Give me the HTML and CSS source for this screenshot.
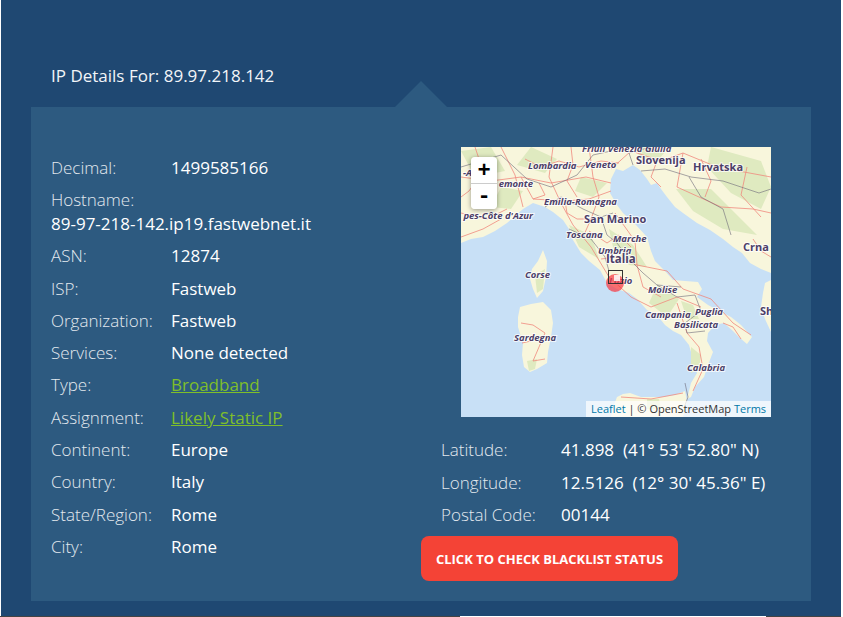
FILE: index.html
```html
<!DOCTYPE html>
<html lang="en">
<head>
<meta charset="utf-8">
<title>IP Details</title>
<link rel="stylesheet" href="styles.css">
</head>
<body>
<div class="page">
  <section class="details">
    <h2 class="heading">IP Details For: 89.97.218.142</h2>
    <div class="panel">
      <span class="arrow"></span>
      <div class="col col-left">
        <div class="row"><span class="key">Decimal:</span><span class="val">1499585166</span></div>
        <div class="row"><span class="key">Hostname:</span> <span class="val">89-97-218-142.ip19.fastwebnet.it</span></div>
        <div class="row"><span class="key">ASN:</span><span class="val">12874</span></div>
        <div class="row"><span class="key">ISP:</span><span class="val">Fastweb</span></div>
        <div class="row"><span class="key">Organization:</span><span class="val">Fastweb</span></div>
        <div class="row"><span class="key">Services:</span><span class="val">None detected</span></div>
        <div class="row"><span class="key">Type:</span><a class="link" href="#">Broadband</a></div>
        <div class="row"><span class="key">Assignment:</span><a class="link" href="#">Likely Static IP</a></div>
        <div class="row"><span class="key">Continent:</span><span class="val">Europe</span></div>
        <div class="row"><span class="key">Country:</span><span class="val">Italy</span></div>
        <div class="row"><span class="key">State/Region:</span><span class="val">Rome</span></div>
        <div class="row"><span class="key">City:</span><span class="val">Rome</span></div>
      </div>
      <div class="col col-right">
        <div class="map">
          <svg class="map-art" viewBox="0 0 310 270" width="310" height="270" aria-label="Map of Italy">
            <rect class="sea" width="310" height="270"/>
            <g class="base">
              <path class="land" d="M0 0H310V126L300 122 289 116 281 106 272 100 262 92 249 83 236 76 222 66 214 60 206 50 200 42 196 36 190 38 186 32 179 23 172 18 162 24 155 22 150 32 149 46 156 58 162 66 175 78 186 90 190 104 194 114 204 124 212 133 224 134 237 135 241 142 236 150 247 158 258 164 270 170 280 178 291 190 286 197 279 191 272 184 263 176 254 178 247 186 246 194 252 205 247 218 243 230 234 240 230 250 226 252 230 236 236 226 232 212 228 198 220 188 212 184 204 178 196 168 186 163 176 152 168 146 156 142 146 136 139 123 128 114 120 106 112 93 108 82 102 73 92 65 84 60 72 56 62 62 46 76 34 84 22 90 10 92 0 96Z"/>
              <path class="land" d="M310 133V185L304 172 300 160 302 146 304 136Z"/>
              <path class="land" d="M82 103 86 114 85 130 82 144 76 151 72 142 69 132 71 122 77 114Z"/>
              <path class="land" d="M59 160 70 157 82 155 90 163 92 176 90 190 87 205 86 216 76 222 69 225 63 220 61 208 62 196 57 180 57 170Z"/>
              <path class="land" d="M156 250 162 247 169 246 180 250 202 250 214 248 224 244 226 254 222 270H150L153 258Z"/>
              <g class="green">
                <path d="M70 0 96 12 84 26 56 18Z"/>
                <path d="M0 4 30 0 44 24 14 30Z"/>
                <path d="M120 30 146 36 132 50 114 44Z"/>
                <path d="M40 40 62 44 50 62 30 60Z"/>
                <path d="M108 78 130 88 138 112 118 100Z"/>
                <path d="M148 82 172 98 186 120 168 118 152 100Z"/>
                <path d="M196 138 218 152 206 170 188 156Z"/>
                <path d="M215 42 250 42 296 88 262 82 232 64Z"/>
                <path d="M250 0 300 14 310 40 300 62 270 46 246 20Z"/>
                <path d="M180 0 205 4 196 14 176 12Z"/>
                <path d="M230 200 240 208 238 222 230 226Z"/>
                <path d="M74 128 84 122 82 142 76 146Z"/>
                <path d="M66 214 76 212 74 222 68 224Z"/>
                <path d="M220 154 232 158 238 172 226 172Z"/>
                <path d="M186 252 198 252 200 262 186 262Z"/>
              </g>
              <g class="roads">
                <path d="M0 30 30 34 60 30 90 36 125 30 150 36"/>
                <path d="M40 0 54 28 62 60"/>
                <path d="M14 0 22 24 8 44 0 50"/>
                <path d="M92 0 88 30 100 56 112 78 130 100 148 130 170 150 190 160"/>
                <path d="M60 30 72 52 104 54 128 52 150 44"/>
                <path d="M128 0 132 30 138 50 130 72 122 90"/>
                <path d="M110 0 112 18 106 34 116 50"/>
                <path d="M64 12 80 20 98 14 118 20 140 14 158 16"/>
                <path d="M78 36 84 48 72 52"/>
                <path d="M104 54 106 66 116 72 130 72"/>
                <path d="M150 22 170 4 200 14 222 6 256 20 310 30"/>
                <path d="M222 6 216 40 260 60 292 62 310 66"/>
                <path d="M240 12 250 34 244 50"/>
                <path d="M286 20 280 48 300 70"/>
                <path d="M196 14 190 30 200 40"/>
                <path d="M154 66 174 94 176 118 182 140 200 150"/>
                <path d="M128 84 146 96 158 88 170 100"/>
                <path d="M140 112 158 110 176 118"/>
                <path d="M176 118 206 124 222 142 250 152 272 176 290 188"/>
                <path d="M190 160 216 150 240 160"/>
                <path d="M216 156 226 186 238 200 242 222 232 244"/>
                <path d="M60 176 72 178 84 186 78 200 72 214 84 212"/>
                <path d="M61 196 70 194"/>
                <path d="M160 250 190 252 222 246"/>
                <path d="M0 66 26 72 46 62"/>
                <path d="M0 90 22 82 40 72"/>
                <path d="M262 176 272 180 280 192"/>
                <path d="M292 92 300 104 310 110"/>
              </g>
              <g class="borders">
                <path d="M0 20 40 8 66 32 90 40 116 28 132 8 150 4"/>
                <path d="M172 18 168 6 190 0"/>
                <path d="M180 24 204 22 230 30 262 34 298 46 310 42"/>
                <path d="M228 30 240 50 262 62 270 88"/>
                <path d="M84 60 100 50 122 62 140 70 152 66"/>
                <path d="M140 70 146 88 156 96 168 112"/>
                <path d="M168 112 182 126 196 138 220 140"/>
                <path d="M196 138 216 150 234 148 240 164 224 176 226 186 244 184"/>
                <path d="M108 82 130 92 144 110 148 124"/>
                <path d="M224 236 227 250 224 258"/>
              </g>
            </g>
            <g class="labels">
              <text x="121" y="5">Friuli Venezia Giulia</text>
              <text x="67" y="22">Lombardia</text>
              <text x="124" y="21">Veneto</text>
              <text x="2" y="29">-A</text>
              <text x="72" y="40" class="end">emonte</text>
              <text x="83" y="58">Emilia-Romagna</text>
              <text x="72" y="72" class="end">pes-Côte d'Azur</text>
              <text x="105" y="91">Toscana</text>
              <text x="152" y="95">Marche</text>
              <text x="137" y="107">Umbria</text>
              <text x="64" y="131">Corse</text>
              <text x="148" y="137">Lazio</text>
              <text x="187" y="146">Molise</text>
              <text x="184" y="171">Campania</text>
              <text x="234" y="168">Puglia</text>
              <text x="213" y="181">Basilicata</text>
              <text x="53" y="194">Sardegna</text>
              <text x="226" y="224">Calabria</text>
            </g>
            <g class="countries">
              <text x="175" y="17">Slovenija</text>
              <text x="232" y="24">Hrvatska</text>
              <text x="123" y="76">San Marino</text>
              <text x="282" y="104">Crna</text>
              <text x="299" y="168">Sh</text>
              <text x="145" y="116" class="capital">Italia</text>
            </g>
          </svg>
          <span class="pin-circle"></span>
          <span class="pin-box"></span>
          <span class="pin-dot"></span>
          <div class="zoom">
            <button class="zoom-btn" type="button">+</button>
            <button class="zoom-btn" type="button">-</button>
          </div>
          <div class="attribution"><a href="#">Leaflet</a> | © OpenStreetMap <a href="#">Terms</a></div>
        </div>
        <div class="coords">
          <div class="row"><span class="key">Latitude:</span><span class="val">41.898&nbsp; (41° 53' 52.80" N)</span></div>
          <div class="row"><span class="key">Longitude:</span><span class="val">12.5126&nbsp; (12° 30' 45.36" E)</span></div>
          <div class="row"><span class="key">Postal Code:</span><span class="val">00144</span></div>
        </div>
        <a class="cta" href="#">Click to check blacklist status</a>
      </div>
    </div>
  </section>
  <div class="below"><span class="below-white"></span></div>
</div>
</body>
</html>
```
FILE: styles.css
```css
* { box-sizing: border-box; }
html, body { margin: 0; padding: 0; }
body {
  background: #fff;
  width: 843px;
  height: 617px;
  overflow: hidden;
  font-family: "Open Sans", sans-serif;
  font-size: 17px;
  color: #fff;
}
.page { width: 841px; }
.details {
  height: 616px;
  margin-left: 1px;
  background: #1f4872;
  padding: 64px 30px 0;
}
.heading {
  margin: 0;
  padding-left: 20px;
  font-size: 17px;
  font-weight: 400;
  line-height: 24px;
  color: #f2f5f8;
}
.panel {
  position: relative;
  display: grid;
  grid-template-columns: 390px 390px;
  height: 494px;
  margin-top: 19px;
  padding-top: 40px;
  background: #2d5a80;
}
.arrow {
  position: absolute;
  left: 364px;
  top: -26px;
  width: 0;
  height: 0;
  border-left: 26px solid transparent;
  border-right: 26px solid transparent;
  border-bottom: 26px solid #2d5a80;
}
.col-left { padding: 8.75px 20px 0; }
.row {
  line-height: 24px;
  margin-bottom: 8.29px;
}
.key {
  display: inline-block;
  width: 120px;
  font-weight: 300;
  color: #e3e9ef;
}
.val { color: #fff; white-space: nowrap; }
.link {
  color: #7fbf2a;
  font-weight: 400;
  text-decoration: underline;
}
.map {
  position: relative;
  width: 310px;
  height: 270px;
  margin: 0 0 21.3px 40px;
  overflow: hidden;
}
.map-art { display: block; }
.sea { fill: #c8e0f6; }
.base { filter: blur(.3px); }
.land { fill: #f8f6dc; }
.green path { fill: #dfeac0; }
.roads path { fill: none; stroke: #f0897e; stroke-width: .8; }
.borders path { fill: none; stroke: #6d6a78; stroke-width: .6; }
.labels text, .countries text {
  font-family: "Open Sans", sans-serif;
  fill: #4c3f68;
  stroke: #fff;
  stroke-width: 2px;
  stroke-opacity: .75;
  paint-order: stroke;
}
.labels text {
  font-size: 9.5px;
  font-style: italic;
  font-weight: 700;
}
.labels .end { text-anchor: end; }
.countries text {
  font-size: 11px;
  font-weight: 700;
}
.countries .capital { font-size: 11.5px; }
.pin-circle {
  position: absolute;
  left: 145px;
  top: 127px;
  width: 18px;
  height: 18px;
  border-radius: 50%;
  background: #f8343f;
  opacity: .7;
}
.pin-box {
  position: absolute;
  left: 147px;
  top: 123px;
  width: 15px;
  height: 14px;
  border: 1px solid #333;
}
.pin-dot {
  position: absolute;
  left: 153px;
  top: 128px;
  width: 6px;
  height: 6px;
  background: #fff;
  opacity: .85;
}
.zoom {
  position: absolute;
  left: 10px;
  top: 10px;
  width: 26px;
  display: flex;
  flex-direction: column;
  border-radius: 4px;
  overflow: hidden;
  box-shadow: 0 1px 5px rgba(0, 0, 0, .4);
}
.zoom-btn {
  display: block;
  width: 26px;
  height: 26px;
  padding: 3px 0 0;
  border: 0;
  background: #fff;
  color: #000;
  font-family: "Liberation Mono", monospace;
  font-size: 22px;
  font-weight: 700;
  line-height: 23px;
  text-align: center;
}
.zoom-btn + .zoom-btn { border-top: 1px solid #ccc; padding-top: 0; }
.attribution {
  position: absolute;
  right: 0;
  bottom: 0;
  width: 185px;
  height: 16px;
  padding: 0 5px;
  background: rgba(255, 255, 255, .7);
  color: #333;
  font-size: 11px;
  line-height: 16px;
  white-space: nowrap;
}
.attribution a { color: #0078a8; text-decoration: none; }
.coords { padding-left: 20px; }
.coords .row:last-child { margin-bottom: 9.2px; }
.cta {
  display: block;
  width: 257px;
  height: 45px;
  border-radius: 8px;
  background: #f44336;
  color: #fff;
  font-size: 13px;
  font-weight: 700;
  line-height: 46px;
  text-align: center;
  text-transform: uppercase;
  text-decoration: none;
}
.below {
  height: 1px;
  background: #444;
  padding-left: 460px;
}
.below-white {
  display: block;
  width: 306px;
  height: 1px;
  background: #fff;
}
```
